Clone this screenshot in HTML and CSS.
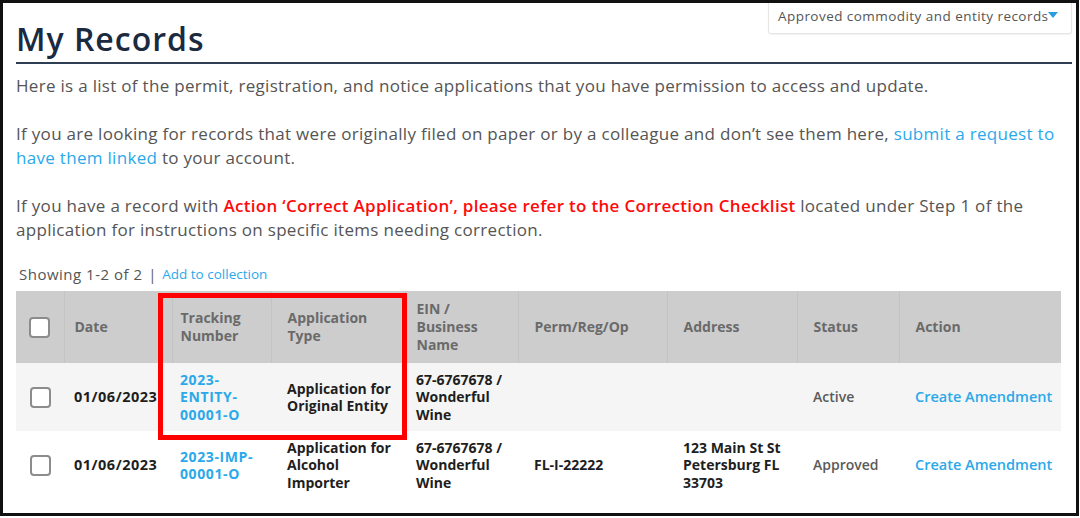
FILE: index.html
```html
<!DOCTYPE html>
<html>
<head>
<meta charset="utf-8">
<link rel="stylesheet" href="styles.css">
</head>
<body>
<div class="frame">
  <div class="head">
    <h1 class="title">My Records</h1>
    <div class="filter">Approved commodity and entity records<span class="caret"></span></div>
  </div>
  <p class="para">Here is a list of the permit, registration, and notice applications that you have permission to access and update.</p>
  <p class="para">If you are looking for records that were originally filed on paper or by a colleague and don’t see them here, <a class="link">submit a request to have them linked</a> to your account.</p>
  <p class="para">If you have a record with <span class="red">Action ‘Correct Application’, please refer to the Correction Checklist</span> located under Step 1 of the application for instructions on specific items needing correction.</p>
  <div class="showing"><span class="count">Showing 1-2 of 2</span><span class="sep">|</span><a class="small-link">Add to collection</a></div>
  <div class="table-wrap">
    <table class="records">
      <colgroup>
        <col class="c-chk"><col class="c-date"><col class="c-track"><col class="c-type"><col class="c-ein"><col class="c-perm"><col class="c-addr"><col class="c-status"><col class="c-action">
      </colgroup>
      <thead>
        <tr>
          <th class="chk"><span class="box"></span></th>
          <th class="p-date">Date</th>
          <th class="p-track">Tracking Number</th>
          <th>Application Type</th>
          <th class="p-ein">EIN / Business Name</th>
          <th>Perm/Reg/Op</th>
          <th>Address</th>
          <th>Status</th>
          <th>Action</th>
        </tr>
      </thead>
      <tbody>
        <tr class="odd">
          <td class="chk"><span class="box"></span></td>
          <td class="p-date dark date">01/06/2023</td>
          <td class="p-track track">2023-<br>ENTITY-<br>00001-O</td>
          <td class="dark">Application for Original Entity</td>
          <td class="p-ein dark">67-6767678 / Wonderful Wine</td>
          <td class="dark"></td>
          <td class="dark"></td>
          <td class="status">Active</td>
          <td class="action">Create Amendment</td>
        </tr>
        <tr>
          <td class="chk"><span class="box"></span></td>
          <td class="p-date dark date">01/06/2023</td>
          <td class="p-track track">2023-IMP-<br>00001-O</td>
          <td class="dark">Application for Alcohol Importer</td>
          <td class="p-ein dark">67-6767678 / Wonderful Wine</td>
          <td class="dark">FL-I-22222</td>
          <td class="dark">123 Main St St Petersburg FL 33703</td>
          <td class="status">Approved</td>
          <td class="action">Create Amendment</td>
        </tr>
      </tbody>
    </table>
    <div class="highlight"></div>
  </div>
</div>
</body>
</html>
```
FILE: styles.css
```css
html, body {
  margin: 0;
  padding: 0;
  background: #ffffff;
}
body {
  font-family: "Open Sans", Lato, sans-serif;
}
.frame {
  box-sizing: border-box;
  width: 1079px;
  height: 516px;
  border: 3px solid #111111;
  padding: 0 4px 0 13px;
  overflow: hidden;
}
.head {
  display: flex;
  justify-content: space-between;
  align-items: flex-start;
  border-bottom: 2px solid #2d3e52;
  height: 59px;
}
.title {
  margin: 0;
  padding-top: 18px;
  font-size: 32px;
  line-height: 36px;
  font-weight: 600;
  color: #1b2a3f;
  letter-spacing: 1px;
}
.filter {
  box-sizing: border-box;
  width: 304px;
  height: 31px;
  border: 1px solid #e6e6e6;
  border-top: none;
  border-radius: 0 0 3px 3px;
  box-shadow: 0 1px 2px rgba(0,0,0,0.06);
  padding: 4px 0 0 9px;
  font-size: 13.5px;
  letter-spacing: 0.45px;
  color: #555555;
  white-space: nowrap;
}
.caret {
  display: inline-block;
  width: 0;
  height: 0;
  border-left: 5px solid transparent;
  border-right: 5px solid transparent;
  border-top: 6px solid #2a9be0;
  vertical-align: 3px;
  margin-left: -1px;
}
.para {
  margin: 10px 0 24px 0;
  font-size: 17px;
  letter-spacing: 0.3px;
  line-height: 24px;
  color: #555555;
}
.para + .para {
  margin-top: 0;
}
.link {
  color: #2aa9ea;
}
.red {
  color: #ff0a0a;
  font-weight: 600;
}
.showing {
  margin-top: -5px;
  height: 26px;
  display: flex;
  align-items: center;
  gap: 6px;
  padding-left: 3px;
}
.count {
  font-size: 15px;
  letter-spacing: 0.5px;
  color: #555555;
}
.sep {
  font-size: 14px;
  color: #555555;
}
.small-link {
  font-size: 13.5px;
  color: #2aa9ea;
}
.table-wrap {
  position: relative;
  margin-top: 4px;
  width: 1045px;
}
.records {
  border-collapse: collapse;
  table-layout: fixed;
  width: 1045px;
}
.c-chk { width: 48px; }
.c-date { width: 108px; }
.c-track { width: 99px; }
.c-type { width: 134px; }
.c-ein { width: 113px; }
.c-perm { width: 149px; }
.c-addr { width: 130px; }
.c-status { width: 102px; }
.c-action { width: 162px; }
.records th {
  background: #cdcdcd;
  border-right: 1px solid #c3c3c3;
  color: #6a6a6a;
  font-size: 14px;
  line-height: 18px;
  font-weight: 700;
  text-align: left;
  padding: 0 8px 0 16px;
  height: 72px;
  box-sizing: border-box;
  vertical-align: middle;
}
.records th:last-child {
  border-right: none;
}
.records td {
  font-size: 14px;
  line-height: 17.5px;
  font-weight: 700;
  padding: 7px 6px 7px 16px;
  vertical-align: middle;
  text-align: left;
}
.records tbody tr {
  height: 68px;
}
.records tr.odd td {
  background: #f5f5f5;
}
.records .chk {
  padding: 0;
  text-align: center;
}
.records .p-date { padding-left: 10px; padding-right: 0; }
.records .p-track { padding-left: 8px; }
.records .p-ein { padding-left: 11px; }
.box {
  display: inline-block;
  box-sizing: border-box;
  width: 21px;
  height: 21px;
  border: 2px solid #8c8c8c;
  border-radius: 4px;
  background: #ffffff;
  vertical-align: middle;
}
.dark {
  color: #1e1e1e;
}
.records .date {
  font-size: 14.5px;
  letter-spacing: 0.5px;
}
.records .track {
  color: #2aa9ea;
  letter-spacing: 0.6px;
}
.status {
  color: #5a5a5a;
  font-weight: 600 !important;
}
.action {
  color: #2aa9ea;
  font-size: 14.5px !important;
  font-weight: 600 !important;
  white-space: nowrap;
}
.highlight {
  position: absolute;
  left: 142px;
  top: 2px;
  width: 249px;
  height: 147px;
  box-sizing: border-box;
  border: 5px solid #ff0000;
  pointer-events: none;
}
```
